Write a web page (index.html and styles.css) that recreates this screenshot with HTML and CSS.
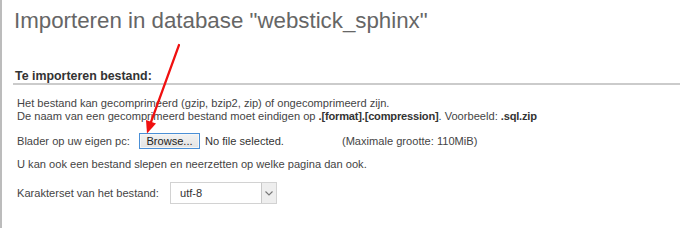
FILE: index.html
```html
<!DOCTYPE html>
<html lang="nl">
<head>
<meta charset="utf-8">
<title>Importeren</title>
<link rel="stylesheet" href="styles.css">
</head>
<body>
<div class="page">
  <h1 class="title">Importeren in database "webstick_sphinx"</h1>
  <section class="import">
    <div class="legend">Te importeren bestand:</div>
    <div class="content">
      <p class="info">Het bestand kan gecomprimeerd (gzip, bzip2, zip) of ongecomprimeerd zijn.<br>De naam van een gecomprimeerd bestand moet eindigen op <b>.[format].[compression]</b>. Voorbeeld: <b>.sql.zip</b></p>
      <div class="row upload">
        <span class="label label-upload">Blader op uw eigen pc:</span>
        <span class="btn">Browse...</span>
        <span class="nofile">No file selected.</span>
        <span class="max">(Maximale grootte: 110MiB)</span>
      </div>
      <p class="drop">U kan ook een bestand slepen en neerzetten op welke pagina dan ook.</p>
      <div class="row charset">
        <span class="label label-charset">Karakterset van het bestand:</span>
        <div class="select">
          <span class="val">utf-8</span>
          <span class="caret"><svg width="8" height="5" viewBox="0 0 8 5"><path d="M0.5 0.5 L4 4 L7.5 0.5" fill="none" stroke="#777" stroke-width="1.1"/></svg></span>
        </div>
      </div>
    </div>
  </section>
</div>
<svg class="arrow" width="200" height="150" viewBox="0 0 200 150">
  <line x1="179" y1="45" x2="151" y2="122" stroke="#f01010" stroke-width="2.2" stroke-linecap="round"/>
  <polygon points="147,133.5 156,123.5 146,120" fill="#f01010"/>
</svg>
</body>
</html>
```

FILE: styles.css
```css
html, body {
  margin: 0;
  padding: 0;
  background: #fff;
}
body {
  border-left: 2px solid #bcbcbc;
  min-height: 228px;
  box-sizing: border-box;
  font-family: "Liberation Sans", Arial, sans-serif;
  color: #333;
  position: relative;
}
.page {
  padding-left: 11px;
}
.title {
  margin: 8px 0 0;
  padding-left: 1px;
  font-size: 22.3px;
  line-height: 26px;
  font-weight: normal;
  color: #666;
}
.import {
  margin-top: 36px;
}
.legend {
  padding-left: 2px;
  font-size: 12.4px;
  line-height: 13px;
  font-weight: bold;
  color: #333;
  border-bottom: 2px solid #cbcbcb;
}
.content {
  padding-left: 4px;
  font-size: 11.1px;
  line-height: 13px;
  color: #444;
}
.info {
  margin: 12px 0 0;
}
.info b {
  color: #333;
  letter-spacing: -0.2px;
}
.row {
  display: flex;
  align-items: center;
}
.upload {
  margin-top: 10px;
  height: 16px;
}
.label-upload {
  width: 122px;
}
.btn {
  box-sizing: border-box;
  width: 61px;
  height: 16px;
  border: 1px solid #4a8fd6;
  background: linear-gradient(#f2f2f2, #e3e3e3);
  box-shadow: inset 0 0 0 1px #f6f6f6;
  color: #222;
  display: flex;
  align-items: center;
  justify-content: center;
  padding-top: 1px;
}
.nofile {
  margin-left: 5px;
  color: #333;
}
.max {
  margin-left: 58px;
}
.drop {
  margin: 9px 0 0;
}
.charset {
  margin-top: 11px;
}
.label-charset {
  width: 153px;
}
.select {
  box-sizing: border-box;
  width: 107px;
  height: 22px;
  border: 1px solid #d2d2d2;
  display: flex;
  align-items: center;
  background: #fff;
}
.val {
  flex: 1;
  padding-left: 9px;
  color: #333;
}
.caret {
  width: 15px;
  height: 100%;
  box-sizing: border-box;
  border-left: 1px solid #c8c8c8;
  background: #eeeeee;
  display: flex;
  align-items: center;
  justify-content: center;
}
.arrow {
  position: absolute;
  left: -2px;
  top: 0;
}
```
